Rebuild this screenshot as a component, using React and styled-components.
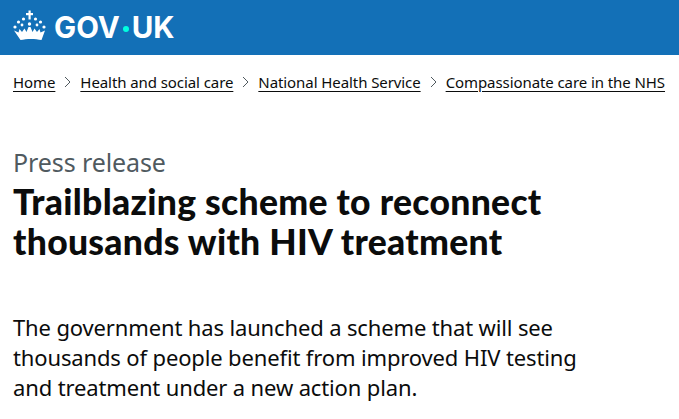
import React from 'react';
import styled, { createGlobalStyle } from 'styled-components';

const GlobalStyle = createGlobalStyle`
	html, body { margin: 0; padding: 0; background: #fff; }
	body { font-family: "Noto Sans", Arial, sans-serif; color: #0b0c0c; overflow: hidden; }
`;

const S = {};

S.Header = styled.header`
	align-items: center;
	background: #1370b7;
	display: flex;
	gap: 8px;
	height: 55px;
	padding: 0 13px;
`;
S.Crown = styled.svg`
	display: block;
	height: 32px;
	margin-top: -4px;
	width: 33px;
`;
S.Logo = styled.span`
	color: #fff;
	font-family: Inter, Arial, sans-serif;
	font-size: 29.5px;
	font-weight: 700;
	line-height: 1;
`;
S.Dot = styled.span`
	background: #00ffe0;
	border-radius: 50%;
	display: inline-block;
	height: 6px;
	margin: 0 3px;
	vertical-align: 6px;
	width: 6px;
`;
S.Crumbs = styled.nav`
	align-items: center;
	display: flex;
	font-size: 15px;
	letter-spacing: -0.08px;
	line-height: 20px;
	margin-top: 17px;
	padding: 0 13px;
	white-space: nowrap;
`;
S.Crumb = styled.a`
	color: #0b0c0c;
	text-decoration: underline;
	text-underline-offset: 3px;
`;
S.Chevron = styled.svg`
	display: block;
	fill: none;
	flex: none;
	height: 12px;
	margin: 0 9px;
	stroke: #505a5f;
	stroke-width: 1;
	width: 7px;
`;
S.Main = styled.main`
	padding: 0 13px;
`;
S.Caption = styled.div`
	color: #505a5f;
	font-size: 25px;
	letter-spacing: -0.1px;
	line-height: 30px;
	margin-top: 55px;
`;
S.Title = styled.h1`
	font-family: Lato, "Noto Sans", sans-serif;
	font-size: 35.5px;
	font-weight: 900;
	letter-spacing: 0.3px;
	line-height: 40px;
	margin: 5px 0 0;
`;
S.Lead = styled.p`
	font-size: 22px;
	letter-spacing: -0.14px;
	line-height: 30px;
	margin: 50px 0 0;
	max-width: 600px;
`;

const crumbs = ['Home', 'Health and social care', 'National Health Service', 'Compassionate care in the NHS'];

const Crown = () => (
	<S.Crown viewBox='0 0 33 32'>
		<g fill='#fff'>
			<rect x='15.500' y='0.500' width='2.200' height='9' />
			<rect x='13' y='3' width='7' height='2.200' />
			<circle cx='16.500' cy='14' r='1.700' />
			<circle cx='10.500' cy='9' r='1.600' />
			<circle cx='22.500' cy='9' r='1.600' />
			<circle cx='5.500' cy='12' r='1.600' />
			<circle cx='27.500' cy='12' r='1.600' />
			<circle cx='2' cy='17' r='1.600' />
			<circle cx='31' cy='17' r='1.600' />
			<circle cx='9' cy='15' r='1.400' />
			<circle cx='24' cy='15' r='1.400' />
			<path d='M1 20.500l4.500 2 1-3.500 2.500 3 2.500-3.500 2 3.500 2-5h2l2 5 2-3.500 2.500 3.500 2.500-3 1 3.500 4.500-2-3.500 9.500c-6-1.500-15-1.500-21 0z' />
		</g>
	</S.Crown>
);

const App = () => (
	<>
		<GlobalStyle />
		<S.Header>
			<Crown />
			<S.Logo>GOV<S.Dot />UK</S.Logo>
		</S.Header>
		<S.Crumbs>
			{crumbs.map((c, i) => (
				<React.Fragment key={c}>
					{i > 0 && (
						<S.Chevron viewBox='0 0 7 12'>
							<path d='M1 1l5 5-5 5' />
						</S.Chevron>
					)}
					<S.Crumb>{c}</S.Crumb>
				</React.Fragment>
			))}
		</S.Crumbs>
		<S.Main>
			<S.Caption>Press release</S.Caption>
			<S.Title>Trailblazing scheme to reconnect<br />thousands with HIV treatment</S.Title>
			<S.Lead>The government has launched a scheme that will see thousands of people benefit from improved HIV testing and treatment under a new action plan.</S.Lead>
		</S.Main>
	</>
);

export default App;
